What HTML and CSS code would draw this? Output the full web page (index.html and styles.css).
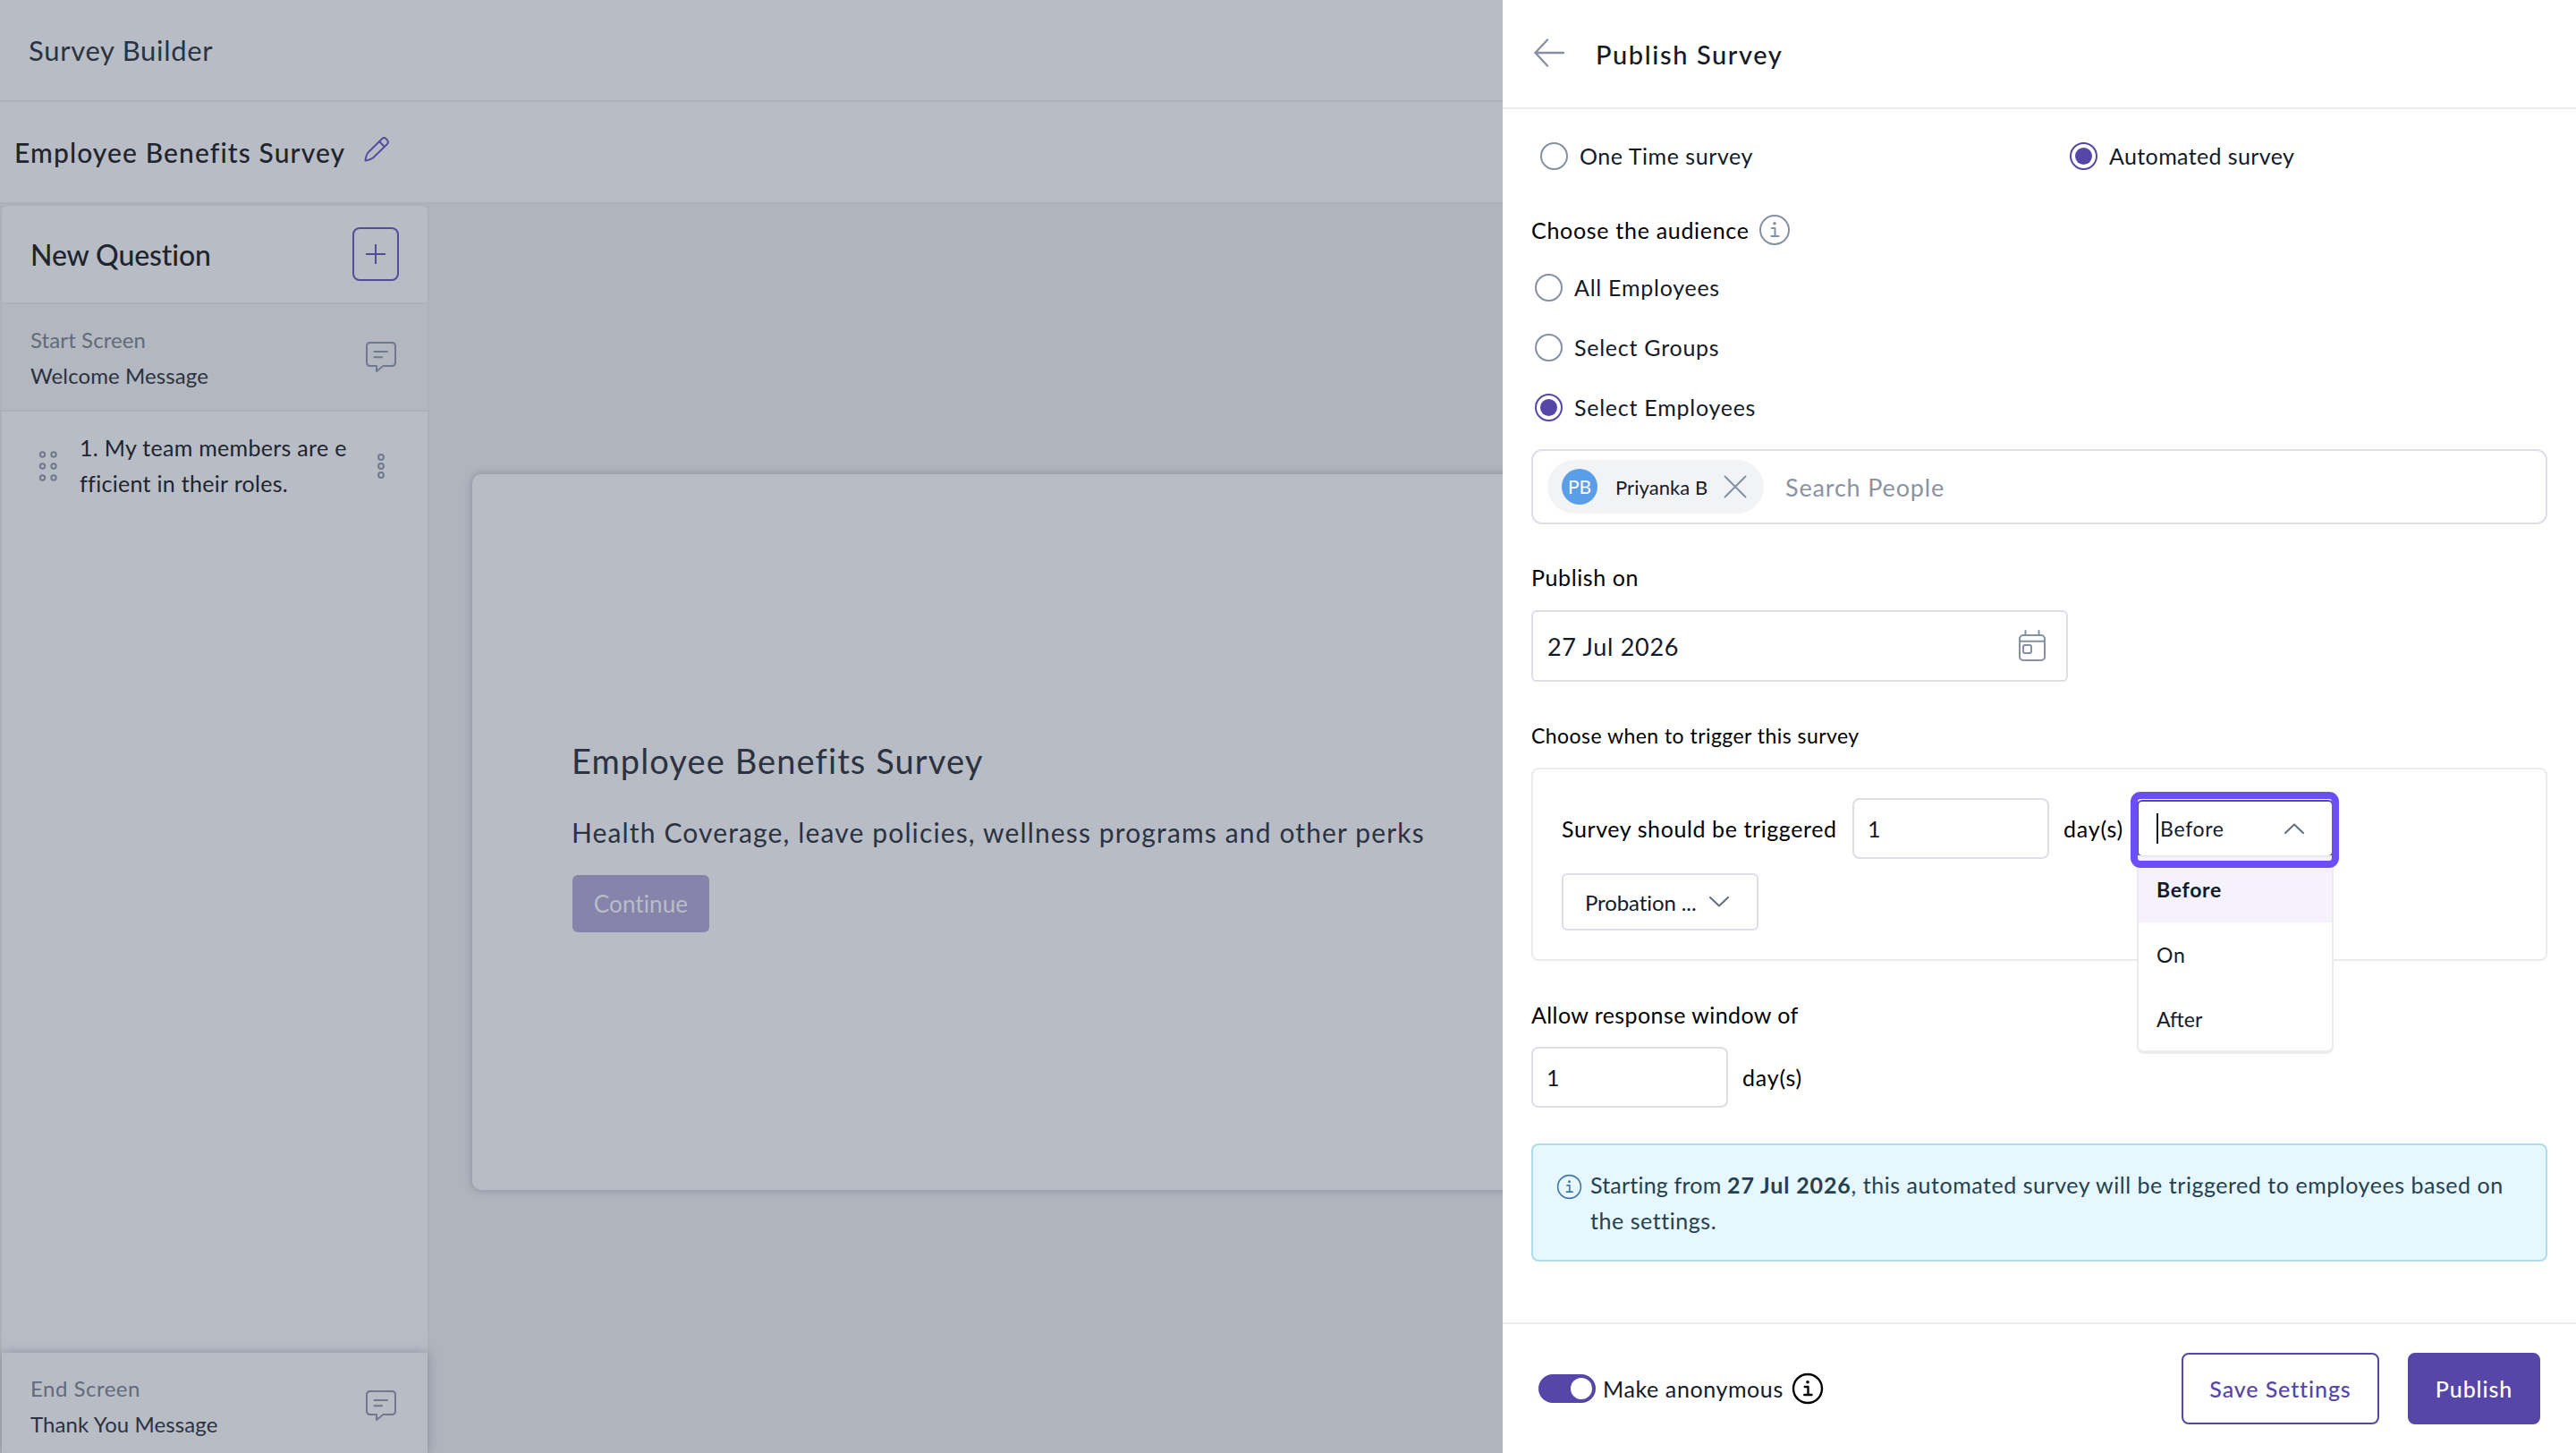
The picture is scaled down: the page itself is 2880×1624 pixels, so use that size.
FILE: index.html
```
<html>
<head>

<title>Survey Builder</title>

<link rel="stylesheet" href="styles.css">

</head>
<body>

<div class="page">

<div class="builder">

  <div class="topBar">Survey Builder</div>

  <div class="nameBar">
    <span>Employee Benefits Survey</span>
    <svg class="pencil" width="28" height="28" viewBox="0 0 28 28"><path d="M1.5 26.5 C2 22 2.5 20 4.5 17.5 L20 2.2 C21.5 0.8 23.3 0.8 24.5 2 L26 3.6 C27.2 5 27.2 6.6 26 8 L10.5 23 C8 25.2 6 25.8 1.5 26.5 Z M17 5 L22.8 11"/></svg>
  </div>

  <div class="workArea">

    <div class="sidebar">
      <div class="newQuestion">
        <span>New Question</span>
        <button class="addButton"><svg width="22" height="22" viewBox="0 0 22 22"><path d="M11 0 V22 M0 11 H22"/></svg></button>
      </div>

      <div class="screen startScreen">
        <div>
          <div class="screenType">Start Screen</div>
          <div class="screenName">Welcome Message</div>
        </div>
        <svg class="chat" width="34" height="35" viewBox="0 0 34 35"><path d="M5 1 H29 Q33 1 33 5 V23 Q33 27 29 27 H19.5 L12 33 V27 H5 Q1 27 1 23 V5 Q1 1 5 1 Z M9.5 11 H24 M9.5 17.3 H18"/></svg>
      </div>

      <div class="question">
        <svg class="drag" width="22" height="34" viewBox="0 0 22 34">
          <circle cx="4.5" cy="4" r="2.7"/><circle cx="17" cy="4" r="2.7"/>
          <circle cx="4.5" cy="17" r="2.7"/><circle cx="17" cy="17" r="2.7"/>
          <circle cx="4.5" cy="30" r="2.7"/><circle cx="17" cy="30" r="2.7"/>
        </svg>
        <div class="questionText">1. My team members are e<br>fficient in their roles.</div>
        <svg class="more" width="10" height="30" viewBox="0 0 10 30">
          <circle cx="5" cy="5" r="2.9"/><circle cx="5" cy="15" r="2.9"/><circle cx="5" cy="25" r="2.9"/>
        </svg>
      </div>

      <div class="screen endScreen">
        <div>
          <div class="screenType">End Screen</div>
          <div class="screenName">Thank You Message</div>
        </div>
        <svg class="chat" width="34" height="35" viewBox="0 0 34 35"><path d="M5 1 H29 Q33 1 33 5 V23 Q33 27 29 27 H19.5 L12 33 V27 H5 Q1 27 1 23 V5 Q1 1 5 1 Z M9.5 11 H24 M9.5 17.3 H18"/></svg>
      </div>
    </div>

    <div class="canvas">
      <div class="card">
        <div class="cardTitle">Employee Benefits Survey</div>
        <div class="cardText">Health Coverage, leave policies, wellness programs and other perks</div>
        <button class="continue">Continue</button>
      </div>
    </div>

  </div>
</div>

<div class="panel">

  <div class="panelHead">
    <svg class="back" width="34" height="32" viewBox="0 0 34 32"><path d="M33 16 H1.5 M15 1.5 L1.5 16 L15 30.5"/></svg>
    <h1>Publish Survey</h1>
  </div>

  <div class="panelBody">

    <div class="typeRow">
      <label class="option"><span class="radio"></span><span class="wide1">One Time survey</span></label>
      <label class="option"><span class="radio checked"></span><span class="wide2">Automated survey</span></label>
    </div>

    <div class="label audience">
      <span>Choose the audience</span>
      <svg class="info" width="36" height="36" viewBox="0 0 36 36"><circle cx="18" cy="18" r="16"/><path d="M14.8 16 H18.5 V25 M14.3 25 H22.5"/><circle class="dot" cx="18" cy="10.8" r="1.8"/></svg>
    </div>

    <label class="option all"><span class="radio"></span><span>All Employees</span></label>
    <label class="option groups"><span class="radio"></span><span>Select Groups</span></label>
    <label class="option employees"><span class="radio checked"></span><span>Select Employees</span></label>

    <div class="people">
      <div class="chip">
        <span class="avatar">PB</span>
        <span class="chipName">Priyanka B</span>
        <svg class="close" width="26" height="26" viewBox="0 0 26 26"><path d="M1.5 1.5 L24.5 24.5 M24.5 1.5 L1.5 24.5"/></svg>
      </div>
      <span class="placeholder">Search People</span>
    </div>

    <div class="label publishOn">Publish on</div>
    <div class="date">
      <span>27 Jul 2026</span>
      <svg class="calendar" width="32" height="36" viewBox="0 0 32 36"><rect x="2" y="6" width="28" height="28" rx="4"/><path d="M2 12.7 H30 M8.5 1 V6 M23.5 1 V6"/><rect x="6" y="17" width="9" height="9" rx="2"/></svg>
    </div>

    <div class="label when">Choose when to trigger this survey</div>
    <div class="trigger">
      <div class="triggerRow">
        <span class="triggerText">Survey should be triggered</span>
        <div class="number">1</div>
        <span class="days triggerDays">day(s)</span>
        <div class="select open">
          <span class="cursor"></span>
          <span>Before</span>
          <svg class="chevron" width="22" height="12" viewBox="0 0 22 12"><path d="M1 11 L11 1.5 L21 11"/></svg>
          <div class="menu">
            <div class="menuItem picked">Before</div>
            <div class="menuItem">On</div>
            <div class="menuItem after">After</div>
          </div>
          <div class="ring"></div>
        </div>
      </div>
      <div class="select probation">
        <span>Probation ...</span>
        <svg class="chevron" width="22" height="12" viewBox="0 0 22 12"><path d="M1 1 L11 10.5 L21 1"/></svg>
      </div>
    </div>

    <div class="label window">Allow response window of</div>
    <div class="windowRow">
      <div class="number">1</div>
      <span class="days">day(s)</span>
    </div>

    <div class="notice">
      <svg class="info noticeIcon" width="29" height="29" viewBox="0 0 36 36"><circle cx="18" cy="18" r="16"/><path d="M14.8 16 H18.5 V25 M14.3 25 H22.5"/><circle class="dot" cx="18" cy="10.8" r="1.8"/></svg>
      <div><span class="starting">Starting from </span><b>27 Jul 2026</b>, this automated survey will be triggered to employees based on<br>the settings.</div>
    </div>

  </div>

  <div class="panelFoot">
    <span class="toggle"></span>
    <span class="anonymous">Make anonymous</span>
    <svg class="info black" width="36" height="36" viewBox="0 0 36 36"><circle cx="18" cy="18" r="16"/><path d="M14.8 16 H18.5 V25 M14.3 25 H22.5"/><circle class="dot" cx="18" cy="10.8" r="1.8"/></svg>
    <button class="save">Save Settings</button>
    <button class="publish">Publish</button>
  </div>

</div>

</div>

</body>
</html>
```
FILE: styles.css
```
body {
  margin: 0;
  font-family: Lato, "Open Sans", sans-serif;
  font-size: 25px;
  letter-spacing: 0.6px;
  color: #131a28;
}

* {
  box-sizing: border-box;
}

button {
  font-family: inherit;
  padding: 0;
}

svg {
  fill: none;
  stroke-width: 2;
  stroke-linecap: round;
  stroke-linejoin: round;
  flex-shrink: 0;
}

.page {
  display: flex;
  width: 2880px;
  height: 1624px;
  overflow: hidden;
}

/* left side, dimmed while the panel is open */

.builder {
  width: 1680px;
  display: flex;
  flex-direction: column;
  background-color: #b8bdc5;
  overflow: hidden;
}

.topBar {
  height: 114px;
  border-bottom: 2px solid #adb1b9;
  padding-left: 32px;
  font-size: 31px;
  letter-spacing: 0.7px;
  line-height: 112px;
  color: #2b3242;
}

.nameBar {
  display: flex;
  height: 114px;
  border-bottom: 2px solid #adb1b9;
  padding-left: 16px;
  font-size: 30px;
  font-weight: 500;
  letter-spacing: 1.1px;
  line-height: 113px;
  color: #20242f;
}

.pencil {
  margin: 39px 0 0 21px;
  stroke: #564d9c;
}

.workArea {
  flex: 1;
  display: flex;
  background-color: #b0b4bc;
}

.sidebar {
  width: 480px;
  display: flex;
  flex-direction: column;
  border: 2px solid #adb1b9;
  border-bottom: none;
  border-radius: 8px 8px 0 0;
  background-color: #b8bdc5;
}

.newQuestion {
  display: flex;
  align-items: center;
  justify-content: space-between;
  height: 110px;
  border-bottom: 2px solid #adb1b9;
  padding: 0 32px 0 32px;
  font-size: 32px;
  font-weight: 500;
  letter-spacing: -0.1px;
  color: #20242f;
}

.addButton {
  display: flex;
  align-items: center;
  justify-content: center;
  width: 52px;
  height: 60px;
  border: 2px solid #554b96;
  border-radius: 8px;
  background: none;
  stroke: #554b96;
}

.screen {
  display: flex;
  justify-content: space-between;
  padding: 20px 35px 0 32px;
  font-size: 24px;
  letter-spacing: 0.1px;
  line-height: 40px;
}

.startScreen {
  height: 120px;
  border-bottom: 2px solid #adb1b9;
  background-color: #b3b8c0;
}

.endScreen {
  height: 112px;
  margin-top: auto;
  background-color: #b8bdc5;
  box-shadow: 0 0 12px rgba(110, 115, 140, 0.6);
}

.screenType {
  color: #616a7b;
}

.screenName {
  color: #2b3242;
}

.endScreen .screenType {
  letter-spacing: 0.5px;
}

.chat {
  margin-top: 22px;
  stroke: #70798c;
}

.question {
  display: flex;
  padding: 20px 47px 0 41px;
  line-height: 40px;
  letter-spacing: 0.3px;
  color: #20242f;
}

.drag {
  margin-top: 24px;
  stroke: #70798c;
}

.questionText {
  flex: 1;
  margin-left: 24px;
}

.more {
  margin-top: 26px;
  stroke: #70798c;
}

.canvas {
  flex: 1;
  padding: 302px 0 0 48px;
  min-width: 0;
}

.card {
  display: flex;
  flex-direction: column;
  align-items: flex-start;
  width: 1600px;
  height: 800px;
  padding: 296px 0 0 112px;
  border-radius: 10px;
  background-color: #b8bdc5;
  box-shadow: 0 0 10px rgba(110, 115, 140, 0.6);
  white-space: nowrap;
  color: #2b3242;
}

.cardTitle {
  font-size: 38px;
  letter-spacing: 1.1px;
  line-height: 48px;
  margin-left: -1px;
}

.cardText {
  margin-top: 36px;
  font-size: 30px;
  letter-spacing: 1.14px;
  line-height: 40px;
  margin-left: -1px;
}

.continue {
  width: 153px;
  height: 64px;
  margin-top: 28px;
  border: none;
  border-radius: 6px;
  background-color: #8684ab;
  font-size: 26px;
  letter-spacing: 0.1px;
  color: #b8bdc8;
}

/* publish panel */

.panel {
  width: 1200px;
  display: flex;
  flex-direction: column;
  background-color: white;
}

.panelHead {
  display: flex;
  align-items: center;
  height: 122px;
  border-bottom: 2px solid #ececee;
  padding: 0 0 2px 35px;
}

.back {
  stroke: #8791a3;
  stroke-width: 2.4;
}

.panelHead h1 {
  margin: 2px 0 0 35px;
  font-size: 29px;
  font-weight: 500;
  letter-spacing: 1.6px;
}

.panelBody {
  flex: 1;
  display: flex;
  flex-direction: column;
  padding: 36px 32px 0 32px;
}

.typeRow {
  display: flex;
  padding-left: 6px;
}

.typeRow .option {
  flex: 0 0 592px;
}

.option {
  display: flex;
  align-items: center;
  height: 32px;
  letter-spacing: 0.75px;
}

.option .wide1 {
  letter-spacing: 0.55px;
}

.option .wide2 {
  letter-spacing: 0.38px;
}

.radio {
  display: flex;
  align-items: center;
  justify-content: center;
  width: 31px;
  height: 31px;
  margin: 0 13px 0 4px;
  border: 2px solid #8590a3;
  border-radius: 50%;
}

.radio.checked {
  border-color: #5546a8;
}

.radio.checked:after {
  content: "";
  width: 19px;
  height: 19px;
  border-radius: 50%;
  background-color: #5546a8;
}

.label {
  height: 32px;
  line-height: 32px;
  color: black;
}

.audience {
  display: flex;
  align-items: center;
  margin-top: 51px;
  letter-spacing: 0.7px;
}

.info {
  stroke: #8590a3;
}

.info .dot {
  fill: #8590a3;
  stroke: none;
}

.info.black {
  stroke: black;
  stroke-width: 2.4;
}

.info.black .dot {
  fill: black;
}

.audience .info {
  margin-left: 10px;
}

.all {
  margin-top: 32px;
}

.groups,
.employees {
  margin-top: 35px;
}

.people {
  display: flex;
  align-items: center;
  height: 84px;
  margin-top: 31px;
  padding-left: 16px;
  border: 2px solid #dedee5;
  border-radius: 12px;
}

.chip {
  display: flex;
  align-items: center;
  width: 242px;
  height: 60px;
  padding-left: 16px;
  border-radius: 30px;
  background-color: #f2f3f5;
}

.avatar {
  width: 40px;
  height: 40px;
  border-radius: 50%;
  background-color: #5a9de8;
  font-size: 21px;
  letter-spacing: 0;
  line-height: 40px;
  text-align: center;
  color: white;
}

.chipName {
  width: 122px;
  padding-left: 20px;
  font-size: 22px;
  letter-spacing: 0.07px;
  white-space: nowrap;
}

.close {
  margin-left: 19px;
  stroke: #8590a3;
}

.placeholder {
  margin-left: 24px;
  font-size: 27px;
  letter-spacing: 0.84px;
  color: #8a93a4;
}

.publishOn {
  margin-top: 43px;
}

.date {
  display: flex;
  align-items: center;
  justify-content: space-between;
  width: 600px;
  height: 80px;
  margin-top: 21px;
  padding: 0 22px 0 16px;
  border: 2px solid #dedee5;
  border-radius: 6px;
  font-size: 27px;
  letter-spacing: 0.7px;
}

.calendar {
  stroke: #8590a3;
}

.when {
  margin-top: 44px;
  font-size: 23px;
  letter-spacing: 0.45px;
}

.trigger {
  height: 216px;
  margin-top: 20px;
  padding: 32px;
  border: 2px solid #ebebee;
  border-radius: 8px;
}

.triggerRow {
  display: flex;
  align-items: center;
}

.triggerText {
  width: 325px;
  color: black;
}

.number {
  width: 220px;
  height: 68px;
  padding-left: 15px;
  border: 2px solid #dedee5;
  border-radius: 8px;
  line-height: 65px;
}

.days {
  margin-left: 16px;
  letter-spacing: 0.8px;
  color: black;
}

.triggerDays {
  width: 82px;
}

.select {
  display: flex;
  align-items: center;
  justify-content: space-between;
  width: 220px;
  height: 64px;
  border: 2px solid #dedee5;
  border-radius: 6px;
  font-size: 23px;
  letter-spacing: 0.7px;
  background-color: white;
}

.select .chevron {
  margin-right: 31px;
  stroke: #646d7d;
}

.select.open {
  position: relative;
  border-color: #5546a8;
  padding-left: 20px;
}

.select.open .chevron {
  margin-left: auto;
}

.cursor {
  width: 2px;
  height: 34px;
  margin-right: 2px;
  background-color: #131a28;
}

.menu {
  position: absolute;
  top: 60px;
  left: -2px;
  width: 220px;
  height: 222px;
  border: 2px solid #ebebee;
  border-bottom: 4px solid #ececee;
  border-radius: 0 0 8px 8px;
  background-color: white;
}

.menuItem {
  height: 72px;
  padding-left: 20px;
  line-height: 73px;
}

.picked {
  height: 73px;
  font-weight: 700;
  background-color: #f5f1fd;
}

.after {
  letter-spacing: 0;
}

/* focus highlight around the opened select */
.ring {
  position: absolute;
  top: -11px;
  left: -9px;
  width: 233px;
  height: 85px;
  border: 8px solid #6b4ef6;
  border-radius: 11px;
}

.probation {
  margin-top: 16px;
  padding-left: 24px;
  font-size: 24px;
  letter-spacing: -0.1px;
}

.probation .chevron {
  margin-right: 31px;
}

.window {
  margin-top: 44px;
  letter-spacing: 0.42px;
}

.windowRow {
  display: flex;
  align-items: center;
  margin-top: 20px;
}

.notice {
  display: flex;
  height: 132px;
  margin-top: 40px;
  padding: 24px 0 0 26px;
  border: 2px solid #b0dbea;
  border-radius: 8px;
  background-color: #e6f7ff;
  line-height: 40px;
  letter-spacing: 0.54px;
  white-space: nowrap;
  color: #24414f;
}

.starting {
  letter-spacing: 0.2px;
}

.notice b {
  letter-spacing: 0.85px;
}

.noticeIcon {
  margin: 8px 9px 0 0;
  stroke: #3f78a3;
}

.noticeIcon .dot {
  fill: #3f78a3;
}

.panelFoot {
  display: flex;
  align-items: center;
  height: 146px;
  border-top: 2px solid #ececee;
  padding: 0 40px;
}

.toggle {
  display: flex;
  align-items: center;
  justify-content: flex-end;
  width: 64px;
  height: 32px;
  padding-right: 4px;
  border-radius: 16px;
  background-color: #5546a8;
}

.toggle:after {
  content: "";
  width: 24px;
  height: 24px;
  border-radius: 50%;
  background-color: white;
}

.anonymous {
  margin: 0 9px 0 8px;
}

.save,
.publish {
  height: 80px;
  border: 2px solid #5546a8;
  border-radius: 8px;
  font-size: 25px;
  font-weight: 500;
  letter-spacing: 0.9px;
}

.save {
  width: 221px;
  margin-left: auto;
  background-color: white;
  color: #5546a8;
}

.publish {
  width: 148px;
  margin-left: 32px;
  background-color: #5546a8;
  color: white;
}
```
